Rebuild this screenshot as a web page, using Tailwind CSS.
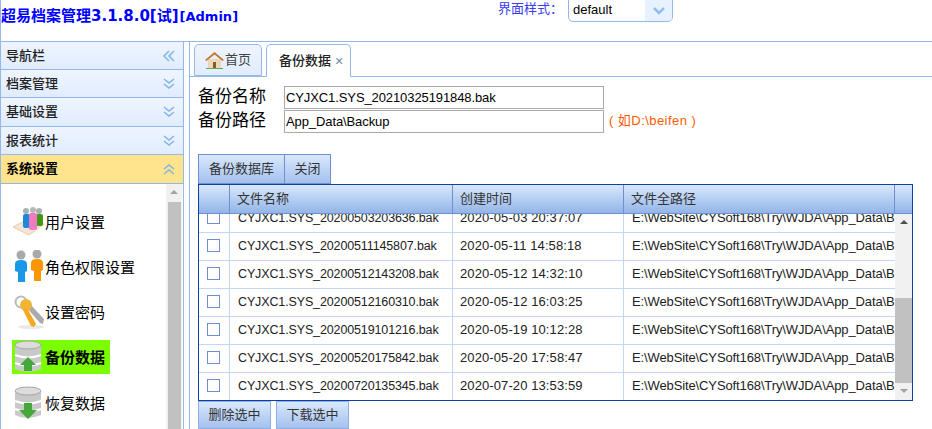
<!DOCTYPE html>
<html lang="zh-CN">

<head>
    <meta charset="UTF-8" />
    <title>超易档案管理</title>
    <script src="https://cdn.jsdelivr.net/npm/@tailwindcss/browser@4"></script>
</head>

<body class="w-[932px] h-[429px] overflow-hidden bg-white text-black font-['Liberation_Sans','Noto_Sans_CJK_SC',sans-serif]">
    <div class="flex flex-col h-[429px] border-l border-[#95b8e7]">
        <!-- top bar -->
        <header class="h-[42px] shrink-0 flex border-b border-[#95b8e7] relative">
            <div class="pt-[6px] text-[15px] leading-[20px] font-bold text-[#0000ff] font-['DejaVu_Sans','Noto_Sans_CJK_SC',sans-serif] whitespace-nowrap">超易档案管理3.1.8.0[试]<span class="text-[13px] ml-[1px]">[Admin]</span></div>
            <div class="absolute left-[497px] top-0 flex">
                <span class="text-[13px] leading-[18px] text-[#3a3af0] w-[70px]">界面样式：</span>
                <div class="w-[105px] h-[23px] -mt-[1px] flex border border-[#95b8e7] rounded-b-[5px] overflow-hidden">
                    <span class="flex-1 pl-[4px] text-[13px] leading-[19px]">default</span>
                    <span class="w-[27px] bg-[#e8f1ff] flex items-center justify-center">
                        <svg width="14" height="8" viewBox="0 0 14 8" fill="none" stroke="#8fc0ec" stroke-width="2.5"><path d="M2 1l5 5 5-5" /></svg>
                    </span>
                </div>
            </div>
        </header>

        <div class="flex flex-1 min-h-0">
            <!-- accordion -->
            <aside class="w-[183px] shrink-0 flex flex-col border-r border-[#95b8e7]">
                <div class="h-[28px] shrink-0 flex items-center justify-between pl-[5px] pr-[8px] bg-gradient-to-b from-[#eff5ff] to-[#e0ecff] border-b border-[#95b8e7] text-[13px] text-[#222]">
                    <span class="font-medium">导航栏</span>
                    <svg width="12" height="12" viewBox="0 0 12 12" fill="none" stroke="#7fb4e6" stroke-width="1.5"><path d="M6 1L1 6l5 5M11 1L6 6l5 5" /></svg>
                </div>
                <div class="h-[28px] shrink-0 flex items-center justify-between pl-[5px] pr-[8px] bg-gradient-to-b from-[#eff5ff] to-[#e0ecff] border-b border-[#95b8e7] text-[13px] text-[#222]">
                    <span class="font-medium">档案管理</span>
                    <svg width="12" height="12" viewBox="0 0 12 12" fill="none" stroke="#7fb4e6" stroke-width="1.5"><path d="M1 1l5 4 5-4M1 6l5 4 5-4" /></svg>
                </div>
                <div class="h-[29px] shrink-0 flex items-center justify-between pl-[5px] pr-[8px] bg-gradient-to-b from-[#eff5ff] to-[#e0ecff] border-b border-[#95b8e7] text-[13px] text-[#222]">
                    <span class="font-medium">基础设置</span>
                    <svg width="12" height="12" viewBox="0 0 12 12" fill="none" stroke="#7fb4e6" stroke-width="1.5"><path d="M1 1l5 4 5-4M1 6l5 4 5-4" /></svg>
                </div>
                <div class="h-[28px] shrink-0 flex items-center justify-between pl-[5px] pr-[8px] bg-gradient-to-b from-[#eff5ff] to-[#e0ecff] border-b border-[#95b8e7] text-[13px] text-[#222]">
                    <span class="font-medium">报表统计</span>
                    <svg width="12" height="12" viewBox="0 0 12 12" fill="none" stroke="#7fb4e6" stroke-width="1.5"><path d="M1 1l5 4 5-4M1 6l5 4 5-4" /></svg>
                </div>
                <div class="h-[29px] shrink-0 flex items-center justify-between pl-[5px] pr-[8px] bg-[#ffe48d] border-b border-[#95b8e7] text-[13px] font-bold text-black">
                    <span>系统设置</span>
                    <svg width="12" height="12" viewBox="0 0 12 12" fill="none" stroke="#7fb4e6" stroke-width="1.5"><path d="M1 6l5-4 5 4M1 11l5-4 5 4" /></svg>
                </div>

                <div class="flex-1 flex min-h-0 overflow-hidden">
                    <div class="flex-1 flex flex-col pl-[11px] pt-[21px] gap-[11px]">
                        <div class="h-[34px] flex items-center">
                            <svg width="33" height="34" viewBox="0 0 33 34" class="shrink-0">
                                <path d="M1 22L18 13l14 6-15 11z" fill="#f3e6d6" stroke="#ecc9ab" />
                                <circle cx="14" cy="6" r="3" fill="#a8b0b0" /><rect x="11" y="9" width="7" height="14" rx="2" fill="#1e88d8" />
                                <circle cx="27" cy="6" r="3" fill="#a8b0b0" /><rect x="24" y="9" width="7" height="12" rx="2" fill="#3f9a12" />
                                <circle cx="21" cy="5" r="3" fill="#b8b8b8" /><rect x="17" y="8" width="8" height="17" rx="2" fill="#ef7cc0" />
                            </svg>
                            <span class="text-[15px] leading-[20px] mt-[2px]">用户设置</span>
                        </div>
                        <div class="h-[34px] flex items-center">
                            <svg width="33" height="34" viewBox="0 0 33 34" class="shrink-0">
                                <circle cx="9" cy="5" r="4.500" fill="#a9a9a9" /><path d="M3 14q0-4 6-4t6 4v7l-2 1v10H6V22l-3-1z" fill="#1a98e8" />
                                <circle cx="25" cy="4" r="4.500" fill="#a9a9a9" /><path d="M19 13q0-4 6-4t6 4v7l-2 1v10h-7V21l-3-1z" fill="#fb9600" />
                            </svg>
                            <span class="text-[15px] leading-[20px] mt-[2px]">角色权限设置</span>
                        </div>
                        <div class="h-[34px] flex items-center">
                            <svg width="33" height="34" viewBox="0 0 33 34" class="shrink-0">
                                <ellipse cx="19" cy="32" rx="13" ry="2" fill="#e8e8e8" />
                                <circle cx="9" cy="7" r="5.500" fill="none" stroke="#b7bcbc" stroke-width="2" />
                                <path d="M18 9l14 15-1 5-3-1-13-15z" fill="#a9aaaa" />
                                <circle cx="14" cy="10" r="6" fill="#f3b335" />
                                <path d="M15 13l9 16-2 3-3-1-8-16z" fill="#f6a81f" />
                            </svg>
                            <span class="text-[15px] leading-[20px] mt-[2px]">设置密码</span>
                        </div>
                        <div class="h-[34px] w-[98px] flex items-center bg-[#7cfc00]">
                            <svg width="33" height="34" viewBox="0 0 33 34" class="shrink-0">
                                <path d="M3 5v24q12 6 26 0V5z" fill="#c9c9c9" />
                                <ellipse cx="16" cy="5" rx="13" ry="4" fill="#dcdcdc" stroke="#a8a8a8" />
                                <path d="M3 15q13 5 26 0M3 23q13 5 26 0" fill="none" stroke="#fff" stroke-width="2" />
                                <path d="M16 17l8 8h-4v6h-8v-6H8z" fill="#45a83a" />
                            </svg>
                            <span class="text-[15px] leading-[20px] font-bold mt-[1px]">备份数据</span>
                        </div>
                        <div class="h-[34px] mt-[1px] flex items-center">
                            <svg width="33" height="34" viewBox="0 0 33 34" class="shrink-0">
                                <path d="M3 5v24q12 6 26 0V5z" fill="#c9c9c9" />
                                <ellipse cx="16" cy="5" rx="13" ry="4" fill="#dcdcdc" stroke="#a8a8a8" />
                                <path d="M3 15q13 5 26 0M3 23q13 5 26 0" fill="none" stroke="#fff" stroke-width="2" />
                                <path d="M12 17h8v7h5l-9 9-9-9h5z" fill="#45a83a" />
                            </svg>
                            <span class="text-[15px] leading-[20px] mt-[2px]">恢复数据</span>
                        </div>
                    </div>
                    <div class="w-[16px] shrink-0 bg-[#f1f1f1] flex flex-col items-center pt-[6px] mr-[1px]">
                        <div class="w-0 h-0 border-x-[4px] border-x-transparent border-b-[4px] border-b-[#a3a3a3]"></div>
                        <div class="w-[13px] flex-1 mt-[8px] bg-[#c1c1c1]"></div>
                    </div>
                </div>
            </aside>

            <div class="w-[5px] shrink-0"></div>

            <!-- main panel -->
            <main class="flex-1 min-w-0 border-l border-[#95b8e7] pl-[8px]">
                <div class="flex items-end h-[35px] border-b border-[#95b8e7] gap-[4px] -ml-[8px] pl-[4px]">
                    <div class="w-[68px] h-[32px] flex items-center justify-center gap-[1px] border border-[#95b8e7] rounded-t-[5px] bg-gradient-to-b from-[#eff5ff] to-[#e0ecff] text-[13px] text-[#444]">
                        <svg width="19" height="18" viewBox="0 0 19 18">
                            <path d="M3 8h13v9H3z" fill="#e9d9b8" />
                            <path d="M8 11h3v6H8z" fill="#8a5a2b" />
                            <path d="M0 9l9.500-8L19 9l-1.500 1-8-6.500L1.500 10z" fill="#c4762c" />
                            <path d="M1 17h17v1H1z" fill="#6aa84f" />
                        </svg>
                        <span>首页</span>
                    </div>
                    <div class="w-[85px] h-[33px] -mb-[1px] flex items-center border border-[#95b8e7] border-b-white rounded-t-[5px] bg-white pl-[12px] text-[13px] font-medium text-[#222]">
                        <span>备份数据</span>
                        <span class="ml-[4px] text-[#6f86aa] text-[14px] leading-none">×</span>
                    </div>
                </div>

                <div class="pt-[8px]">
                    <div class="flex items-center h-[24px]">
                        <label class="w-[86px] text-[17px] leading-[22px]">备份名称</label>
                        <input value="CYJXC1.SYS_20210325191848.bak" class="w-[320px] h-[23px] border border-[#a9a9a9] pl-[1px] text-[13px] tracking-[-0.1px] text-black" />
                    </div>
                    <div class="flex items-center h-[24px]">
                        <label class="w-[86px] text-[17px] leading-[22px]">备份路径</label>
                        <input value="App_Data\Backup" class="w-[320px] h-[23px] border border-[#a9a9a9] pl-[1px] text-[13px] tracking-[-0.1px] text-black" />
                        <span class="ml-[5px] text-[13px] tracking-[0.45px] text-[#ff5a00]">( 如D:\beifen )</span>
                    </div>
                </div>

                <div class="flex pt-[21px] h-[51px]">
                    <button class="w-[87px] h-[30px] border border-[#6d90cf] bg-gradient-to-b from-[#d9e8fc] to-[#a4c1ee] text-[13px] text-[#333]">备份数据库</button>
                    <button class="w-[47px] h-[30px] -ml-[1px] border border-[#6d90cf] bg-gradient-to-b from-[#d9e8fc] to-[#a4c1ee] text-[13px] text-[#333]">关闭</button>
                </div>

                <div class="w-[715px] h-[217px] border border-[#0d3fa8] flex flex-col overflow-hidden">
                    <div class="h-[29px] shrink-0 grid grid-cols-[31px_223px_171px_271px_1fr] bg-gradient-to-b from-[#d9e8fc] to-[#93b5e8] border-b border-[#6d90cf] text-[13px] leading-[27px] text-[#333]">
                        <div class="border-r border-[#6d90cf]"></div>
                        <div class="border-r border-[#6d90cf] pl-[7px]">文件名称</div>
                        <div class="border-r border-[#6d90cf] pl-[7px]">创建时间</div>
                        <div class="border-r border-[#6d90cf] pl-[7px]">文件全路径</div>
                        <div></div>
                    </div>
                    <div class="flex-1 min-h-0 flex">
                        <div class="w-[696px] overflow-hidden flex flex-col justify-end text-[13px] text-[#222]">
                            <div class="h-[28px] shrink-0 grid grid-cols-[31px_223px_171px_271px] border-b border-[#c3d6f3] items-center">
                                <div class="h-full border-r border-[#c3d6f3] flex items-center justify-center pr-[1px] pb-[2px]"><span class="block size-[13px] border border-[#6f8fc9] bg-white"></span></div>
                                <div class="h-full border-r border-[#c3d6f3] pl-[8px] leading-[26px] text-[12.5px] tracking-[-0.13px] whitespace-nowrap">CYJXC1.SYS_20200503203636.bak</div>
                                <div class="h-full border-r border-[#c3d6f3] pl-[7px] leading-[26px] tracking-[0.1px]">2020-05-03 20:37:07</div>
                                <div class="h-full pl-[8px] leading-[26px] tracking-[-0.12px] overflow-hidden whitespace-nowrap">E:\WebSite\CYSoft168\Try\WJDA\App_Data\B</div>
                            </div>
                            <div class="h-[28px] shrink-0 grid grid-cols-[31px_223px_171px_271px] border-b border-[#c3d6f3] items-center">
                                <div class="h-full border-r border-[#c3d6f3] flex items-center justify-center pr-[1px] pb-[2px]"><span class="block size-[13px] border border-[#6f8fc9] bg-white"></span></div>
                                <div class="h-full border-r border-[#c3d6f3] pl-[8px] leading-[26px] text-[12.5px] tracking-[-0.13px] whitespace-nowrap">CYJXC1.SYS_20200511145807.bak</div>
                                <div class="h-full border-r border-[#c3d6f3] pl-[7px] leading-[26px] tracking-[0.1px]">2020-05-11 14:58:18</div>
                                <div class="h-full pl-[8px] leading-[26px] tracking-[-0.12px] overflow-hidden whitespace-nowrap">E:\WebSite\CYSoft168\Try\WJDA\App_Data\B</div>
                            </div>
                            <div class="h-[28px] shrink-0 grid grid-cols-[31px_223px_171px_271px] border-b border-[#c3d6f3] items-center">
                                <div class="h-full border-r border-[#c3d6f3] flex items-center justify-center pr-[1px] pb-[2px]"><span class="block size-[13px] border border-[#6f8fc9] bg-white"></span></div>
                                <div class="h-full border-r border-[#c3d6f3] pl-[8px] leading-[26px] text-[12.5px] tracking-[-0.13px] whitespace-nowrap">CYJXC1.SYS_20200512143208.bak</div>
                                <div class="h-full border-r border-[#c3d6f3] pl-[7px] leading-[26px] tracking-[0.1px]">2020-05-12 14:32:10</div>
                                <div class="h-full pl-[8px] leading-[26px] tracking-[-0.12px] overflow-hidden whitespace-nowrap">E:\WebSite\CYSoft168\Try\WJDA\App_Data\B</div>
                            </div>
                            <div class="h-[28px] shrink-0 grid grid-cols-[31px_223px_171px_271px] border-b border-[#c3d6f3] items-center">
                                <div class="h-full border-r border-[#c3d6f3] flex items-center justify-center pr-[1px] pb-[2px]"><span class="block size-[13px] border border-[#6f8fc9] bg-white"></span></div>
                                <div class="h-full border-r border-[#c3d6f3] pl-[8px] leading-[26px] text-[12.5px] tracking-[-0.13px] whitespace-nowrap">CYJXC1.SYS_20200512160310.bak</div>
                                <div class="h-full border-r border-[#c3d6f3] pl-[7px] leading-[26px] tracking-[0.1px]">2020-05-12 16:03:25</div>
                                <div class="h-full pl-[8px] leading-[26px] tracking-[-0.12px] overflow-hidden whitespace-nowrap">E:\WebSite\CYSoft168\Try\WJDA\App_Data\B</div>
                            </div>
                            <div class="h-[28px] shrink-0 grid grid-cols-[31px_223px_171px_271px] border-b border-[#c3d6f3] items-center">
                                <div class="h-full border-r border-[#c3d6f3] flex items-center justify-center pr-[1px] pb-[2px]"><span class="block size-[13px] border border-[#6f8fc9] bg-white"></span></div>
                                <div class="h-full border-r border-[#c3d6f3] pl-[8px] leading-[26px] text-[12.5px] tracking-[-0.13px] whitespace-nowrap">CYJXC1.SYS_20200519101216.bak</div>
                                <div class="h-full border-r border-[#c3d6f3] pl-[7px] leading-[26px] tracking-[0.1px]">2020-05-19 10:12:28</div>
                                <div class="h-full pl-[8px] leading-[26px] tracking-[-0.12px] overflow-hidden whitespace-nowrap">E:\WebSite\CYSoft168\Try\WJDA\App_Data\B</div>
                            </div>
                            <div class="h-[28px] shrink-0 grid grid-cols-[31px_223px_171px_271px] border-b border-[#c3d6f3] items-center">
                                <div class="h-full border-r border-[#c3d6f3] flex items-center justify-center pr-[1px] pb-[2px]"><span class="block size-[13px] border border-[#6f8fc9] bg-white"></span></div>
                                <div class="h-full border-r border-[#c3d6f3] pl-[8px] leading-[26px] text-[12.5px] tracking-[-0.13px] whitespace-nowrap">CYJXC1.SYS_20200520175842.bak</div>
                                <div class="h-full border-r border-[#c3d6f3] pl-[7px] leading-[26px] tracking-[0.1px]">2020-05-20 17:58:47</div>
                                <div class="h-full pl-[8px] leading-[26px] tracking-[-0.12px] overflow-hidden whitespace-nowrap">E:\WebSite\CYSoft168\Try\WJDA\App_Data\B</div>
                            </div>
                            <div class="h-[27px] shrink-0 grid grid-cols-[31px_223px_171px_271px] items-center">
                                <div class="h-full border-r border-[#c3d6f3] flex items-center justify-center pr-[1px] pb-[2px]"><span class="block size-[13px] border border-[#6f8fc9] bg-white"></span></div>
                                <div class="h-full border-r border-[#c3d6f3] pl-[8px] leading-[26px] text-[12.5px] tracking-[-0.13px] whitespace-nowrap">CYJXC1.SYS_20200720135345.bak</div>
                                <div class="h-full border-r border-[#c3d6f3] pl-[7px] leading-[26px] tracking-[0.1px]">2020-07-20 13:53:59</div>
                                <div class="h-full pl-[8px] leading-[26px] tracking-[-0.12px] overflow-hidden whitespace-nowrap">E:\WebSite\CYSoft168\Try\WJDA\App_Data\B</div>
                            </div>
                        </div>
                        <div class="flex-1 bg-[#f1f1f1] flex flex-col items-center pt-[6px] pb-[7px]">
                            <div class="w-0 h-0 border-x-[4px] border-x-transparent border-b-[4px] border-b-[#505050]"></div>
                            <div class="flex-1"></div>
                            <div class="w-full h-[85px] bg-[#c1c1c1]"></div>
                            <div class="w-0 h-0 mt-[6px] border-x-[4px] border-x-transparent border-t-[4px] border-t-[#a3a3a3]"></div>
                        </div>
                    </div>
                </div>

                <div class="flex gap-[5px]">
                    <button class="w-[73px] h-[28px] border border-[#8fb0e2] bg-gradient-to-b from-[#d9e8fc] to-[#a4c1ee] text-[13px] text-[#333]">删除选中</button>
                    <button class="w-[73px] h-[28px] border border-[#8fb0e2] bg-gradient-to-b from-[#d9e8fc] to-[#a4c1ee] text-[13px] text-[#333]">下载选中</button>
                </div>
            </main>
        </div>
    </div>
</body>

</html>
